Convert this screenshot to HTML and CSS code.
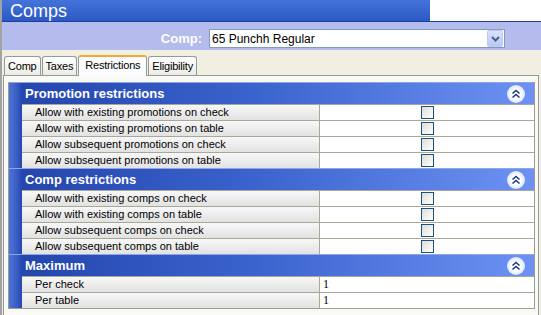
FILE: index.html
```html
<!DOCTYPE html>
<html lang="en">
<head>
    <meta charset="UTF-8">
    <meta name="viewport" content="width=device-width, initial-scale=1.0">
    <title>Comps</title>
    <link rel="stylesheet" href="styles.css">
</head>
<body>
    <div class="window">
        <div class="titlebar">
            <h1>Comps</h1>
            <div class="title-box"></div>
        </div>

        <div class="selector">
            <label>Comp:</label>
            <div class="select">
                <span class="select-text">65 Punchh Regular</span>
                <span class="drop">
                    <svg width="9" height="6" viewBox="0 0 9 6"><path d="M1 1 L4.5 4.5 L8 1" fill="none" stroke="#4d6185" stroke-width="2"/></svg>
                </span>
            </div>
        </div>

        <div class="tab-area">
            <div class="tabs">
                <div class="tab">Comp</div>
                <div class="tab">Taxes</div>
                <div class="tab selected">Restrictions</div>
                <div class="tab">Eligibility</div>
            </div>

            <div class="panel">
                <div class="grid">
                    <div class="section">
                        <div class="strip"></div>
                        <div class="section-body">
                            <div class="category">
                                <span>Promotion restrictions</span>
                                <span class="collapse"><svg width="18" height="18" viewBox="0 0 18 18"><path d="M5.5 8.5 L9 5.5 L12.5 8.5 M5.5 12.5 L9 9.5 L12.5 12.5" fill="none" stroke="#1d3a84" stroke-width="1.6"/></svg></span>
                            </div>
                            <div class="row"><div class="label">Allow with existing promotions on check</div><div class="value"><span class="checkbox"></span></div></div>
                            <div class="row"><div class="label">Allow with existing promotions on table</div><div class="value"><span class="checkbox"></span></div></div>
                            <div class="row"><div class="label">Allow subsequent promotions on check</div><div class="value"><span class="checkbox"></span></div></div>
                            <div class="row"><div class="label">Allow subsequent promotions on table</div><div class="value"><span class="checkbox"></span></div></div>
                        </div>
                    </div>

                    <div class="section">
                        <div class="strip"></div>
                        <div class="section-body">
                            <div class="category">
                                <span>Comp restrictions</span>
                                <span class="collapse"><svg width="18" height="18" viewBox="0 0 18 18"><path d="M5.5 8.5 L9 5.5 L12.5 8.5 M5.5 12.5 L9 9.5 L12.5 12.5" fill="none" stroke="#1d3a84" stroke-width="1.6"/></svg></span>
                            </div>
                            <div class="row"><div class="label">Allow with existing comps on check</div><div class="value"><span class="checkbox"></span></div></div>
                            <div class="row"><div class="label">Allow with existing comps on table</div><div class="value"><span class="checkbox"></span></div></div>
                            <div class="row"><div class="label">Allow subsequent comps on check</div><div class="value"><span class="checkbox"></span></div></div>
                            <div class="row"><div class="label">Allow subsequent comps on table</div><div class="value"><span class="checkbox"></span></div></div>
                        </div>
                    </div>

                    <div class="section">
                        <div class="strip"></div>
                        <div class="section-body">
                            <div class="category">
                                <span>Maximum</span>
                                <span class="collapse"><svg width="18" height="18" viewBox="0 0 18 18"><path d="M5.5 8.5 L9 5.5 L12.5 8.5 M5.5 12.5 L9 9.5 L12.5 12.5" fill="none" stroke="#1d3a84" stroke-width="1.6"/></svg></span>
                            </div>
                            <div class="row"><div class="label">Per check</div><div class="value text">1</div></div>
                            <div class="row"><div class="label">Per table</div><div class="value text">1</div></div>
                        </div>
                    </div>
                </div>
            </div>
        </div>
    </div>
</body>
</html>
```

FILE: styles.css
```css
body {
    margin: 0;
    font-family: "Liberation Sans", Arial, sans-serif;
    font-size: 11px;
    overflow: hidden;
}
.window {
    width: 539px;
    height: 315px;
    border-left: 2px solid #a3a3a3;
    background-color: #f1efe2;
    overflow: hidden;
}
.titlebar {
    display: flex;
    justify-content: space-between;
    height: 21px;
    border-bottom: 1px solid #1f3f9c;
    background: linear-gradient(#4474da, #2b58c4);
}
.titlebar h1 {
    margin: 0;
    padding-left: 8px;
    font-size: 18px;
    font-weight: normal;
    line-height: 22px;
    color: white;
}
.title-box {
    width: 111px;
    height: 21px;
    background-color: white;
}
.selector {
    display: flex;
    align-items: flex-start;
    justify-content: flex-end;
    height: 21px;
    padding: 7px 36px 0 0;
    background-color: #b4bcee;
}
.selector label {
    margin-right: 7px;
    font-size: 13px;
    font-weight: bold;
    line-height: 19px;
    color: #ffffff;
}
.select {
    display: flex;
    align-items: center;
    justify-content: space-between;
    width: 294px;
    height: 17px;
    border: 1px solid #7f9db9;
    background-color: white;
}
.select-text {
    padding-left: 2px;
    font-size: 12px;
}
.drop {
    display: flex;
    align-items: center;
    justify-content: center;
    width: 14px;
    height: 15px;
    margin-right: 1px;
    border: 1px solid #bccbef;
    border-radius: 2px;
    background: linear-gradient(#d9e3fb, #b7c8f4);
}
.tab-area {
    padding-top: 4px;
}
.tabs {
    display: flex;
    align-items: flex-end;
    height: 21px;
    margin-left: 2px;
    position: relative;
    z-index: 1;
}
.tab {
    height: 18px;
    padding: 0 3px;
    margin-right: 1px;
    border: 1px solid #919b9c;
    border-bottom: none;
    border-radius: 3px 3px 0 0;
    background: linear-gradient(#ffffff, #ecebe3);
    letter-spacing: -0.2px;
    line-height: 19px;
}
.tab.selected {
    height: 19px;
    margin-bottom: -1px;
    padding: 0 6px;
    border-top: 2px solid #f1a838;
    background: #fcfcfe;
    line-height: 17px;
}
.panel {
    height: 300px;
    margin: 0 2px 0 1px;
    padding: 6px 3px 0 4px;
    border: 1px solid #919b9c;
    background-color: #f9f9f6;
}
.grid {
    border: 1px solid #9d9d8e;
    border-top: none;
}
.section {
    display: flex;
    border-top: 1px solid #8fa6e6;
}
.strip {
    width: 13px;
    background: linear-gradient(to right, #4e74d8, #3a60c8 55%, #2546ad);
}
.section-body {
    flex: 1;
}
.category {
    display: flex;
    align-items: center;
    justify-content: space-between;
    height: 21px;
    padding: 0 9px 0 3px;
    background: linear-gradient(to right, #2446ad, #3b63cd 45%, #6d92f4);
    font-size: 13px;
    font-weight: bold;
    color: white;
}
.collapse {
    display: flex;
    width: 18px;
    height: 18px;
    border-radius: 50%;
    background: radial-gradient(circle, #ffffff 35%, #dde6fb 70%, #b9cbf3);
}
.row {
    display: flex;
    height: 15px;
    border-top: 1px solid #a8a899;
}
.label {
    width: 284px;
    padding-left: 13px;
    background: linear-gradient(#f7f7f7, #e2e2e2);
    line-height: 15px;
}
.value {
    display: flex;
    align-items: center;
    justify-content: center;
    flex: 1;
    border-left: 1px solid #a8a899;
    background-color: white;
}
.value.text {
    justify-content: flex-start;
    padding-left: 3px;
    font-family: "Liberation Serif", "Times New Roman", serif;
    font-size: 12px;
}
.checkbox {
    width: 11px;
    height: 11px;
    border: 1px solid #1c5180;
    background: linear-gradient(135deg, #dcdcd6, #ffffff);
}
```
